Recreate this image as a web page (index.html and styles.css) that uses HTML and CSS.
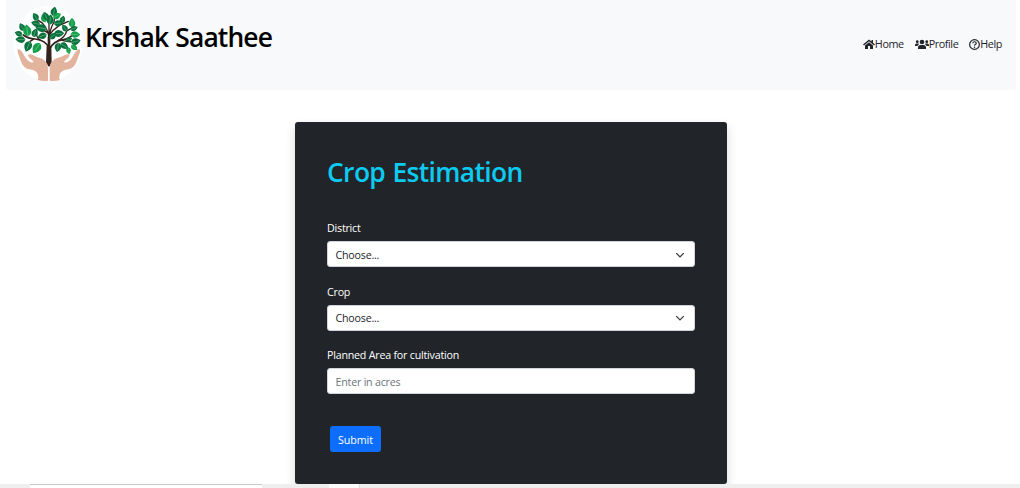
FILE: index.html
```html
<!DOCTYPE html>
<html lang="en">
<head>
<meta charset="utf-8">
<title>Krshak Saathee</title>
<link rel="stylesheet" href="styles.css">
</head>
<body>
<div class="page">
<header class="navbar">
  <a class="brand">
    <svg class="logo" viewBox="39 15 210 231">
      <defs>
        <g id="leaf"><path d="M0 0C-15-6-14-20 0-32C14-20 15-6 0 0Z"/><path class="vein" d="M0 0V-25"/></g>
      </defs>
      <ellipse class="disc" cx="144" cy="131" rx="104" ry="113"/>
      <g class="branches">
        <path stroke-width="8" d="M147 195V112"/>
        <path stroke-width="5" d="M147 145Q138 120 105 117Q85 116 70 105M147 150Q160 122 190 119Q205 117 220 103"/>
        <path stroke-width="4" d="M147 117Q145 88 128 70L106 55M148 117Q148 90 162 66L165 40M148 105Q158 90 178 76L205 64M120 120Q106 110 110 91M174 122Q195 112 200 93L220 82M143 98Q127 87 112 84M100 118Q88 123 80 137M186 121Q205 126 220 126M147 105V55"/>
      </g>
      <path class="trunk" d="M140 138L138 188L147 200L155 188L154 138Z"/>
      <g class="leaves">
        <use href="#leaf" transform="translate(72 92) rotate(-28) scale(.8)"/>
        <use href="#leaf" transform="translate(67 105) rotate(-70) scale(.75)"/>
        <use class="bright" href="#leaf" transform="translate(84 109) rotate(-8) scale(1.12)"/>
        <use href="#leaf" transform="translate(76 119) rotate(-88) scale(.93)"/>
        <use href="#leaf" transform="translate(100 111) rotate(20) scale(.85)"/>
        <use class="bright" href="#leaf" transform="translate(120 130) rotate(215) scale(1.12)"/>
        <use href="#leaf" transform="translate(90 124) rotate(202) scale(1.05)"/>
        <use href="#leaf" transform="translate(113 61) rotate(-30) scale(.8)"/>
        <use href="#leaf" transform="translate(120 74) rotate(-75) scale(.85)"/>
        <use class="bright" href="#leaf" transform="translate(136 67) rotate(-18) scale(.85)"/>
        <use href="#leaf" transform="translate(140 87) rotate(-80) scale(1.08)"/>
        <use href="#leaf" transform="translate(140 103) rotate(-110) scale(.9)"/>
        <use href="#leaf" transform="translate(143 61) rotate(-25) scale(.85)"/>
        <use href="#leaf" transform="translate(149 74) rotate(6) scale(.95)"/>
        <use href="#leaf" transform="translate(159 48) rotate(12) scale(.88)"/>
        <use class="bright" href="#leaf" transform="translate(160 54) rotate(60) scale(.82)"/>
        <use href="#leaf" transform="translate(184 70) rotate(18) scale(.75)"/>
        <use href="#leaf" transform="translate(162 72) rotate(80) scale(.85)"/>
        <use href="#leaf" transform="translate(162 101) rotate(88) scale(.95)"/>
        <use href="#leaf" transform="translate(149 116) rotate(50) scale(.8)"/>
        <use href="#leaf" transform="translate(201 94) rotate(-35) scale(.75)"/>
        <use class="bright" href="#leaf" transform="translate(216 83) rotate(0) scale(.9)"/>
        <use href="#leaf" transform="translate(212 89) rotate(70) scale(.7)"/>
        <use class="bright" href="#leaf" transform="translate(212 103) rotate(92) scale(.9)"/>
        <use href="#leaf" transform="translate(197 122) rotate(70) scale(.65)"/>
        <use href="#leaf" transform="translate(213 128) rotate(76) scale(.93)"/>
        <use class="bright" href="#leaf" transform="translate(214 135) rotate(130) scale(.72)"/>
        <use class="bright" href="#leaf" transform="translate(204 142) rotate(170) scale(.65)"/>
        <use href="#leaf" transform="translate(182 130) rotate(125) scale(.85)"/>
        <use href="#leaf" transform="translate(176 128) rotate(190) scale(.9)"/>
      </g>
      <g class="hands">
        <path id="hand" d="M54 148C61 145 69 160 77 173C84 184 96 190 101 186C99 181 88 176 85 169C81 161 93 162 100 166C112 173 125 173 134 182C144 189 144 201 144 210V242Q128 244 114 240C118 224 111 210 88 208C71 205 65 190 60 176C56 165 50 153 54 148Z"/>
        <use href="#hand" transform="matrix(-1 0 0 1 293 0)"/>
      </g>
    </svg>
    <span class="brand-name">Krshak Saathee</span>
  </a>
  <nav class="nav">
    <a class="nav-link"><svg class="icon home" viewBox="0 0 24 20"><path d="M12 1L0 11L2 13L12 4.5L22 13L24 11L20 7.5V2H17V5ZM12 6.5L4 13.2V20H10V14H14V20H20V13.2Z"/></svg>Home</a>
    <a class="nav-link"><svg class="icon users" viewBox="0 0 28 20"><circle cx="14" cy="6" r="4.7"/><circle cx="4.5" cy="5.5" r="2.8"/><circle cx="23.5" cy="5.5" r="2.8"/><path d="M6 20V17Q6 12 11 12H17Q22 12 22 17V20ZM0 14V12Q0 9 3 9H6Q8 9 8.5 10Q5.5 11.5 5 14ZM28 14V12Q28 9 25 9H22Q20 9 19.5 10Q22.500 11.500 23 14Z"/></svg>Profile</a>
    <a class="nav-link"><svg class="icon help" viewBox="0 0 22 22"><circle class="ring" cx="11" cy="11" r="9.700"/><path class="ring" d="M7.500 8.500Q8 5.500 11 5.500Q14.500 5.500 14.500 8.300Q14.500 10 12.500 11Q11 11.800 11 13.500"/><circle cx="11" cy="16.400" r="1.500"/></svg>Help</a>
  </nav>
</header>
<main class="card">
  <h1 class="title">Crop Estimation</h1>
  <form>
    <div class="field">
      <label class="label">District</label>
      <div class="control">Choose...<svg class="chevron" viewBox="0 0 16 16"><path d="M2 5l6 6 6-6"/></svg></div>
    </div>
    <div class="field">
      <label class="label">Crop</label>
      <div class="control">Choose...<svg class="chevron" viewBox="0 0 16 16"><path d="M2 5l6 6 6-6"/></svg></div>
    </div>
    <div class="field">
      <label class="label" for="area">Planned Area for cultivation</label>
      <input class="control" id="area" placeholder="Enter in acres">
    </div>
    <button class="submit" type="button">Submit</button>
  </form>
</main>
<footer class="taskbar"><div class="search"></div><div class="task"></div></footer>
</div>
</body>
</html>
```
FILE: styles.css
```css
* { box-sizing: border-box; }
body {
  margin: 0;
  background: #fff;
  color: #212529;
  font: 10.7px/16px "Open Sans", "Noto Sans", sans-serif;
  letter-spacing: -.22px;
}
.page { display: flex; flex-direction: column; height: 488px; overflow: hidden; }
.navbar {
  display: flex;
  flex: none;
  justify-content: space-between;
  height: 90px;
  margin: 0 4px 0 6px;
  padding: 5px 14px 0 7px;
  background: #f8f9fb;
  border-radius: 0 0 3px 3px;
}
.brand { display: flex; }
.logo { width: 70px; height: 77px; }
.disc { fill: #fff; }
.branches { fill: none; stroke: #35211b; stroke-linecap: round; }
.trunk { fill: #35211b; }
.leaves { fill: #08723d; }
.leaves .bright { fill: #13a04b; }
.vein { fill: none; stroke: #a5d5b5; stroke-width: 1.3; }
.hands { fill: #e3b49d; }
.brand-name {
  margin: 14px 0 0 2px;
  color: #000;
  font-size: 26.4px;
  font-weight: 550;
  letter-spacing: -.84px;
  word-spacing: 1px;
  line-height: 36px;
  white-space: nowrap;
}
.nav { display: flex; align-items: center; gap: 11px; height: 78px; font-size: 10.8px; letter-spacing: -.42px; }
.nav-link { display: flex; align-items: center; }
.icon { fill: #212529; }
.home { width: 12px; height: 10px; }
.users { width: 14px; height: 10px; }
.help { width: 11px; height: 11px; }
.ring { fill: none; stroke: #212529; stroke-width: 2.4; }
.card {
  flex: none;
  width: 432px;
  height: 362px;
  margin: 32px 0 0 295px;
  padding: 33px 32px 0;
  background: #212529;
  border-radius: 3px;
  box-shadow: 0 5px 11px rgba(0, 0, 0, .15);
}
.title {
  margin: 0 0 30px;
  color: #0dcaf0;
  font-size: 26.4px;
  font-weight: 550;
  letter-spacing: -.62px;
  word-spacing: 1px;
  line-height: 35px;
}
.field { margin-bottom: 17.6px; }
.label { display: block; height: 21px; color: #fff; line-height: 17px; }
.control {
  display: flex;
  align-items: center;
  justify-content: space-between;
  width: 368px;
  height: 26px;
  margin: 0;
  padding: 1px 9px 0 7.5px;
  border: 1px solid #ced4da;
  border-radius: 3px;
  background: #fff;
  color: #212529;
  font: inherit;
  letter-spacing: inherit;
}
.field + .field .label { height: 20px; line-height: 15px; }
.control::placeholder { color: #6c757d; opacity: 1; }
.chevron { width: 10px; height: 10px; fill: none; stroke: #343a40; stroke-width: 2; }
.submit {
  display: block;
  width: 51px;
  height: 26px;
  margin: 32px 0 0 3px;
  padding: 1px 0 0;
  border: 0;
  border-radius: 3px;
  background: #0d6efd;
  color: #fff;
  font: inherit;
  letter-spacing: -.1px;
}
.taskbar {
  display: flex;
  flex: none;
  gap: 67px;
  height: 4px;
  padding-left: 30px;
  background: #eee;
}
.search { width: 232px; background: #fff; border-top: 1px solid #c8c8c8; }
.task { width: 31px; background: #fafafa; border-right: 1px solid #ddd; }
```
